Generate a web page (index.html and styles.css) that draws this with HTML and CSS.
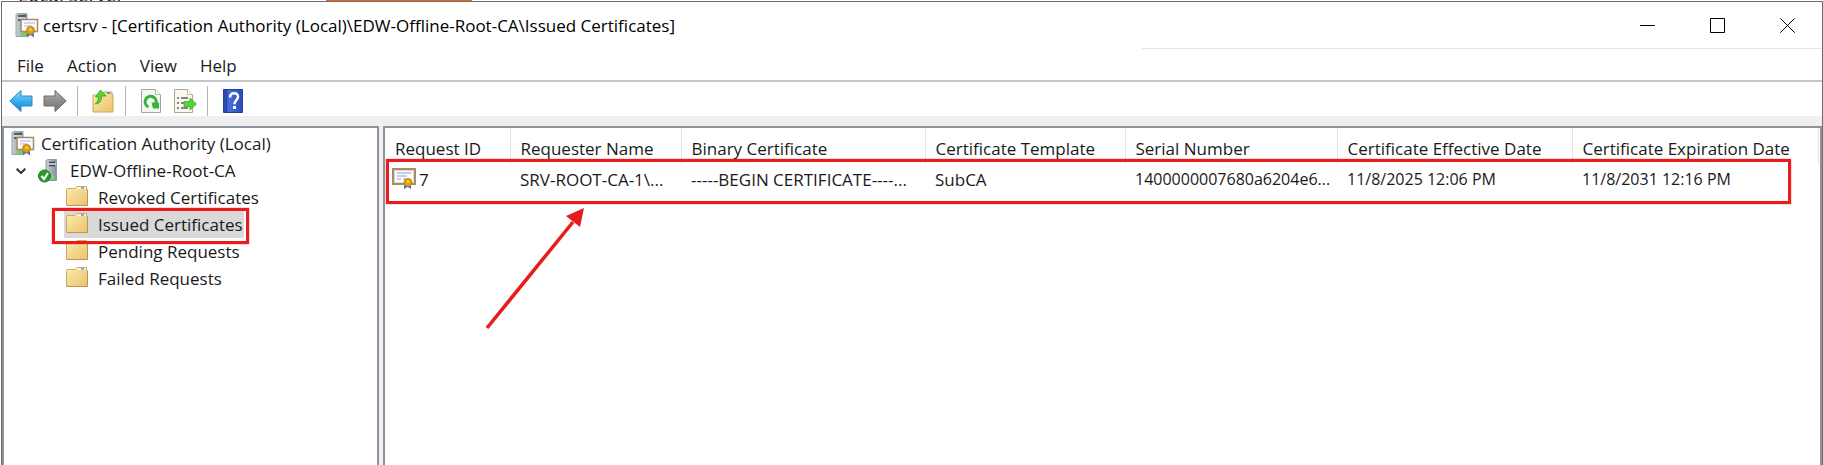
FILE: index.html
```html
<!DOCTYPE html>
<html lang="en">
<head>
<meta charset="utf-8">
<title>certsrv</title>
<link rel="stylesheet" href="styles.css">
</head>
<body>
<svg class="defs" aria-hidden="true">
  <defs>
    <linearGradient id="blue" x1="0" y1="0" x2="0" y2="1"><stop offset="0" stop-color="#8fdcfa"/><stop offset=".5" stop-color="#38aef0"/><stop offset="1" stop-color="#1583d6"/></linearGradient>
    <linearGradient id="gray" x1="0" y1="0" x2="0" y2="1"><stop offset="0" stop-color="#b4b4b4"/><stop offset=".5" stop-color="#8c8c8c"/><stop offset="1" stop-color="#777"/></linearGradient>
    <linearGradient id="tan" x1="0" y1="0" x2="1" y2="1"><stop offset="0" stop-color="#fdebb0"/><stop offset="1" stop-color="#eac36c"/></linearGradient>
    <linearGradient id="steel" x1="0" y1="0" x2="1" y2="0"><stop offset="0" stop-color="#c6d0d6"/><stop offset="1" stop-color="#84929b"/></linearGradient>
    <linearGradient id="navy" x1="0" y1="0" x2="1" y2="0"><stop offset="0" stop-color="#2440a4"/><stop offset=".3" stop-color="#4a6cd8"/><stop offset="1" stop-color="#2b4dbc"/></linearGradient>
  </defs>
  <symbol id="folder" viewBox="0 0 22 20">
    <path d="M1 2.5h8l2-2h9.5v3h1v16H.5v-16z" fill="url(#tan)" stroke="#d0aa5d"/>
    <path d="M11 1h9v2h-9z" fill="#fff5d5"/><path d="M15 1.2h3v1.5h-3z" fill="#4b9be0"/>
    <path d="M1 19.5h20.5V4" fill="none" stroke="#bc9650"/>
  </symbol>
  <symbol id="cert" viewBox="0 0 24 22">
    <path d="M1 1h22v15H1z" fill="#fdfcfa" stroke="#a58e6c" stroke-width="2"/>
    <path d="M2.5 2.5h19v12h-19z" fill="none" stroke="#e3d8c4"/>
    <path d="M5 5h14M5 8h10M5 11h4M11 11h3" stroke="#8e98d6"/>
    <path d="M12 14h7v7l-3.500-2L12 21z" fill="#3578e4"/>
    <circle cx="16" cy="14.500" r="4" fill="#e0a010" stroke="#bf8208"/><circle cx="16" cy="13.500" r="1.500" fill="#f4c850"/>
  </symbol>
  <symbol id="authority" viewBox="0 0 24 25">
    <path d="M1 1.500L3 .5h9v23H1z" fill="url(#steel)" stroke="#9aa5ac"/>
    <path d="M3 3h8M3 7h5" stroke="#35434c" stroke-width="1.500"/><path d="M3 5h8" stroke="#eef3f5"/>
    <path d="M6 6.500h16.500v12H6z" fill="#fdfcfa" stroke="#a9896b" stroke-width="1.500"/>
    <path d="M9 10h11M9 13h8" stroke="#a5aee0"/>
    <path d="M7 20h4v3H7z" fill="#62dd30"/>
    <path d="M12 17h7v7.500L15.500 22 12 24.500z" fill="#3578e4"/>
    <circle cx="15.500" cy="17.500" r="4" fill="#e0a010" stroke="#bf8208"/><circle cx="15.500" cy="16.500" r="1.500" fill="#f4c850"/>
  </symbol>
  <symbol id="server" viewBox="0 0 20 24">
    <path d="M8 1.500L10 .5h8.500v21H8z" fill="url(#steel)" stroke="#8d989f"/>
    <path d="M11 3.500h6M11 6.500h6" stroke="#35434c" stroke-width="1.500"/><path d="M11 5h7" stroke="#eef3f5"/>
    <circle cx="15.500" cy="18" r="1.500" fill="#71e83c"/>
    <circle cx="6.500" cy="17" r="6" fill="#299b2b" stroke="#187b1b"/><path d="M3.500 17l2.500 3 4-6" fill="none" stroke="#fff" stroke-width="2"/>
  </symbol>
</svg>
<div class="backdrop"><span class="backdrop-text">Local server</span><span class="backdrop-tile"></span></div>
<main class="window">
  <header class="titlebar">
    <svg class="app-icon"><use href="#authority"/></svg>
    <h1 class="title">certsrv - [Certification Authority (Local)\EDW-Offline-Root-CA\Issued Certificates]</h1>
    <div class="controls">
      <button class="control" aria-label="Minimize"><svg class="control-icon" viewBox="0 0 15 15"><path d="M0 7.500h15"/></svg></button>
      <button class="control" aria-label="Maximize"><svg class="control-icon" viewBox="0 0 15 15"><path d="M.5 .5h14v14H.5z"/></svg></button>
      <button class="control" aria-label="Close"><svg class="control-icon" viewBox="0 0 15 15"><path d="M.3 .3l14.400 14.400M14.700 .3L.3 14.700"/></svg></button>
    </div>
  </header>
  <nav class="menubar">
    <button class="menu">File</button><button class="menu">Action</button><button class="menu">View</button><button class="menu">Help</button>
  </nav>
  <div class="toolbar">
    <button class="tool" aria-label="Back"><svg class="tool-icon" viewBox="0 0 24 24"><path d="M.8 12L12 1.500V7h11v10H12v5.500z" fill="url(#blue)" stroke="#3286c0"/></svg></button>
    <button class="tool" aria-label="Forward"><svg class="tool-icon" viewBox="0 0 24 24"><path d="M23.200 12L12 1.500V7H1v10h11v5.500z" fill="url(#gray)" stroke="#6c6c6c"/></svg></button>
    <span class="divider"></span>
    <button class="tool" aria-label="Up one level"><svg class="tool-icon" viewBox="0 0 24 24"><path d="M2 6h9l2-3h8v3h1v17H2z" fill="url(#tan)" stroke="#cda75a"/><path d="M16 3h3v2h-3z" fill="#4b9be0"/><path d="M4 15c4 0 7-3 6.500-8H15L9.500 1 4.500 8h3c0 3-1 5-3.500 7z" fill="#55d535" stroke="#2ba51c" stroke-width=".8"/></svg></button>
    <span class="divider"></span>
    <button class="tool" aria-label="Refresh"><svg class="tool-icon" viewBox="0 0 24 24"><path d="M2.500 .5h14l5 5v18h-19z" fill="#f5f5f2" stroke="#a4a4a4"/><path d="M16.500 .5v5h5" fill="#fff" stroke="#bbb"/><path d="M9.500 17.800A5.500 5.500 0 1 1 17 14" fill="none" stroke="#35b33a" stroke-width="3"/><path d="M12.500 13.500h7.500v6h-6z" fill="#35b33a"/></svg></button>
    <button class="tool" aria-label="Export list"><svg class="tool-icon" viewBox="0 0 24 24"><path d="M1.500 .5h13l5 5v18h-18z" fill="#fcf8e7" stroke="#aaa795"/><path d="M14.500 .5v5h5" fill="#fff" stroke="#bbb"/><path d="M4 9h2M4 14h2M4 19h2M8 9h7M8 14h5M8 19h7" stroke="#5c5c78" stroke-width="1.500"/><path d="M11 12.500h6V9l6.500 6-6.500 6v-3.500h-6z" fill="#54d63a" stroke="#39af2a" stroke-width=".8"/></svg></button>
    <span class="divider"></span>
    <button class="tool" aria-label="Help"><svg class="tool-icon" viewBox="0 0 24 24"><path d="M2.500 .5h19v23h-19z" fill="url(#navy)" stroke="#263f95"/><path d="M5.500 1v22" stroke="#2440a0"/><path d="M9 8.500C9 2.500 17.500 3 17 8.200c-.3 3-3.500 3-3.500 7" fill="none" stroke="#fff" stroke-width="2.500"/><path d="M12 17h3v3h-3z" fill="#fff"/></svg></button>
  </div>
  <div class="workspace">
    <nav class="tree" aria-label="Console tree">
      <button class="node"><svg class="node-authority"><use href="#authority"/></svg>Certification Authority (Local)</button>
      <button class="node node-ca"><svg class="chevron" viewBox="0 0 10 6"><path d="M.7 .7L5 5 9.300 .7"/></svg><svg class="node-server"><use href="#server"/></svg>EDW-Offline-Root-CA</button>
      <button class="node leaf"><svg class="node-folder"><use href="#folder"/></svg>Revoked Certificates</button>
      <button class="node leaf selected" aria-current="true"><svg class="node-folder"><use href="#folder"/></svg>Issued Certificates<span class="mark mark-node"></span></button>
      <button class="node leaf"><svg class="node-folder"><use href="#folder"/></svg>Pending Requests</button>
      <button class="node leaf"><svg class="node-folder"><use href="#folder"/></svg>Failed Requests</button>
    </nav>
    <section class="list">
      <table class="grid">
        <colgroup><col class="c-id"><col class="c-name"><col class="c-binary"><col class="c-template"><col class="c-serial"><col class="c-from"><col class="c-to"><col></colgroup>
        <thead><tr><th>Request ID</th><th>Requester Name</th><th>Binary Certificate</th><th>Certificate Template</th><th>Serial Number</th><th>Certificate Effective Date</th><th>Certificate Expiration Date</th><td></td></tr></thead>
        <tbody><tr><td class="id-cell"><svg class="cert-icon"><use href="#cert"/></svg>7</td><td>SRV-ROOT-CA-1\...</td><td>-----BEGIN CERTIFICATE----...</td><td>SubCA</td><td class="figures">1400000007680a6204e6...</td><td class="figures">11/8/2025 12:06 PM</td><td class="figures">11/8/2031 12:16 PM</td><td></td></tr></tbody>
      </table>
      <span class="mark mark-row"></span>
      <svg class="arrow" viewBox="0 0 100 122"><path d="M2 120L88 14" stroke="#e81c1c" stroke-width="3.500"/><path d="M99 0L81 8l14 11z" fill="#e81c1c"/></svg>
    </section>
  </div>
</main>
</body>
</html>
```
FILE: styles.css
```css
* { box-sizing: border-box; }
body {
  margin: 0;
  height: 100vh;
  display: flex;
  flex-direction: column;
  overflow: hidden;
  background: #fff;
  color: #1a1a1a;
  font: 17px/27px "Open Sans", "Noto Sans", sans-serif;
}
button {
  border: 0;
  padding: 0;
  background: none;
  color: inherit;
  font: inherit;
}
svg { display: block; flex: none; }
.defs { position: absolute; width: 0; height: 0; }

.backdrop {
  height: 1px;
  flex: none;
  display: flex;
  align-items: flex-end;
  gap: 200px;
  padding-left: 18px;
  overflow: hidden;
}
.backdrop-text { width: 108px; font-size: 19px; line-height: 12px; white-space: nowrap; }
.backdrop-tile { width: 146px; height: 1px; background: #f26522; }

.window {
  flex: 1;
  min-height: 0;
  display: flex;
  flex-direction: column;
  margin-left: 1px;
  border: 1px solid #6b6d70;
  border-bottom: 0;
}
.titlebar {
  height: 46px;
  flex: none;
  display: flex;
  align-items: center;
  padding-left: 13px;
  color: #000;
}
.app-icon { width: 24px; height: 25px; }
.title { flex: 1; margin: 0 0 0 4px; font-size: 17px; font-weight: 400; }
.controls { display: flex; align-self: stretch; }
.control { width: 70px; display: flex; align-items: center; justify-content: center; }
.control-icon { width: 15px; height: 15px; fill: none; stroke: #000; }

.menubar {
  height: 34px;
  flex: none;
  display: flex;
  align-items: center;
  padding: 2px 4px 0;
  border-bottom: 2px solid #c4c5c9;
  background: linear-gradient(#e6e6e6, #e6e6e6) right top / 680px 1px no-repeat;
}
.menu { padding: 0 12px 0 11px; }

.toolbar {
  height: 34px;
  flex: none;
  display: flex;
  align-items: center;
  padding: 3px 2px 0;
}
.tool { padding: 0 5px; }
.tool-icon { width: 24px; height: 24px; }
.divider { width: 1px; height: 30px; margin: 0 8px 0 5px; background: #b4b4b4; }

.workspace {
  flex: 1;
  min-height: 0;
  display: flex;
  gap: 4px;
  padding-top: 10px;
  background: #efefef;
}
.tree, .list {
  border: 2px solid #8d929d;
  border-width: 2px 2px 0;
  background: #fff;
}
.tree { width: 377px; flex: none; padding: 2px 7px; }
.node {
  height: 27px;
  display: flex;
  align-items: center;
  white-space: nowrap;
}
.node-authority { width: 24px; height: 25px; margin-right: 6px; }
.node-ca { padding-left: 5px; }
.chevron { width: 10px; height: 6px; margin-right: 12px; fill: none; stroke: #333; stroke-width: 2; }
.node-server { width: 20px; height: 24px; margin-right: 12px; }
.leaf { margin-left: 53px; padding: 0 1px 0 2px; }
.node-folder { width: 22px; height: 20px; margin-right: 10px; margin-bottom: 4px; }
.selected { position: relative; background: #d9d9d9; }

.list { position: relative; flex: 1; min-width: 0; }
.grid { width: 100%; table-layout: fixed; border-collapse: collapse; }
.grid th, .grid td {
  padding: 0 0 0 10px;
  text-align: left;
  font-weight: 400;
  white-space: nowrap;
}
.grid thead th { height: 36px; padding-top: 4px; border-right: 1px solid #e5e5e5; }
.grid tbody td { height: 30px; }
.grid .figures { font-size: 16px; }
.c-id { width: 125px; }
.c-name { width: 171px; }
.c-binary { width: 244px; }
.c-template { width: 200px; }
.c-serial { width: 212px; }
.c-from { width: 235px; }
.c-to { width: 246px; }
.grid .id-cell { display: flex; align-items: center; gap: 3px; padding-left: 7px; }
.cert-icon { width: 24px; height: 22px; }

.mark { position: absolute; border: 3px solid #e81c1c; box-shadow: 0 0 1px #e81c1c; pointer-events: none; }
.mark-node { inset: -3px -5px -6px -12px; }
.mark-row { top: 31px; left: 1px; right: 29px; height: 45px; }
.arrow { position: absolute; top: 80px; left: 100px; width: 100px; height: 122px; }
```
